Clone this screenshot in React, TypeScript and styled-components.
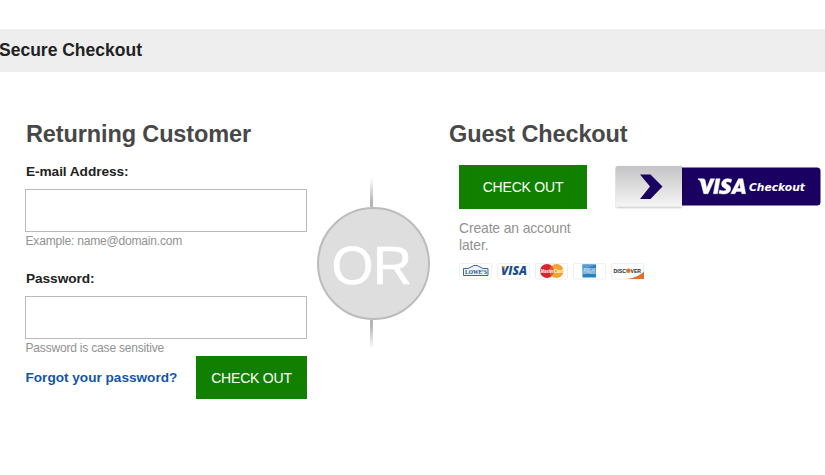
import React from "react";
import styled, { createGlobalStyle } from "styled-components";

const GlobalStyle = createGlobalStyle`
  * { box-sizing: border-box; }
  body {
    margin: 0;
    background: #fff;
    font-family: "Liberation Sans", Arial, Helvetica, sans-serif;
  }
`;

const Page = styled.div`
  width: 825px;
  height: 475px;
  padding-top: 29px;
  overflow: hidden;
  background: #fff;
`;

const TitleBar = styled.header`
  height: 43px;
  background: #eee;
`;

const Title = styled.h1`
  margin: 0 0 0 -1px;
  font-size: 17.5px;
  line-height: 43px;
  color: #222;
`;

const Columns = styled.main`
  display: flex;
  align-items: flex-start;
  padding: 46px 0 0 26px;
`;

const Heading = styled.h2`
  margin: 0;
  height: 46px;
  font-size: 23.5px;
  line-height: 32px;
  letter-spacing: -0.12px;
  color: #484848;
  white-space: nowrap;
`;

const Returning = styled.section`
  width: 281px;
`;

const Field = styled.div<{ $gap?: number }>`
  display: flex;
  flex-direction: column;
  margin-bottom: ${(p) => p.$gap ?? 0}px;
`;

const Label = styled.label`
  height: 25px;
  font-size: 13.7px;
  font-weight: bold;
  line-height: 15px;
  letter-spacing: -0.08px;
  color: #222;
`;

const Input = styled.input`
  width: 282px;
  height: 43px;
  margin-left: -1px;
  border: 1px solid #b9b9b9;
  background: #fff;
  outline: none;
`;

const Hint = styled.span`
  height: 18px;
  margin-left: -0.5px;
  font-size: 12.05px;
  line-height: 18px;
  letter-spacing: -0.21px;
  color: #929292;
`;

const Actions = styled.div`
  display: flex;
  justify-content: space-between;
  align-items: center;
  margin-top: -1px;
`;

const Link = styled.a`
  margin-left: -0.5px;
  font-size: 13.6px;
  font-weight: bold;
  color: #1255a8;
`;

const Button = styled.button<{ $w: number; $h: number }>`
  width: ${(p) => p.$w}px;
  height: ${(p) => p.$h}px;
  padding: 0;
  border: 0;
  background: #118000;
  color: #fff;
  font: 14px "Liberation Sans", Arial, sans-serif;
  letter-spacing: -0.2px;
  white-space: nowrap;
`;

const Divider = styled.div`
  display: flex;
  flex-direction: column;
  align-items: center;
  width: 112px;
  margin: 60px 20px 0 10px;
`;

const Stem = styled.div<{ $down?: boolean }>`
  width: 3px;
  height: 29px;
  margin-right: 3px;
  background: linear-gradient(${(p) => (p.$down ? "to bottom" : "to top")}, #b5b5b5 20%, #fff);
`;

const OrCircle = styled.div`
  display: flex;
  align-items: center;
  justify-content: center;
  width: 113px;
  height: 113px;
  flex: none;
  border: 2px solid #bcbcbc;
  border-radius: 50%;
  background: #dedede;
  color: #fff;
  font-size: 54px;
  line-height: 60px;
  padding: 2px 3px 0 0;
  letter-spacing: -0.5px;
  -webkit-text-stroke: 0.6px #fff;
`;

const Guest = styled.section`
  width: 376px;
`;

const GuestRow = styled.div`
  display: flex;
  align-items: flex-start;
  gap: 24px;
  margin-top: 1px;
  padding-left: 10px;
`;

const GuestOption = styled.div`
  width: 132px;
`;

const Note = styled.p`
  width: 120px;
  margin: 11px 0 0;
  font-size: 13.9px;
  line-height: 17px;
  letter-spacing: -0.12px;
  color: #929292;
`;

const Cards = styled.div`
  display: flex;
  gap: 5px;
  padding: 9px 0 0 10px;
  svg { display: block; }
`;

const VisaCheckout = () => (
  <svg width="210" height="46" viewBox="0 0 210 46" role="img" aria-label="Visa Checkout">
    <defs>
      <linearGradient id="silver" x1="0" y1="0" x2="0" y2="1">
        <stop offset="0" stopColor="#c4c4c6" />
        <stop offset="1" stopColor="#f5f5f5" />
      </linearGradient>
      <filter id="soft" x="-10%" y="-10%" width="120%" height="130%">
        <feDropShadow dx="0" dy="1" stdDeviation="1" floodOpacity="0.3" />
      </filter>
    </defs>
    <path d="M66 2.500H202a3.500 3.500 0 0 1 3.500 3.500V37a3.500 3.500 0 0 1-3.500 3.500H66Z" fill="#1a0061" />
    <path d="M3 1H67V41.500H3a2.500 2.500 0 0 1-2.500-2.500V3.500A2.500 2.500 0 0 1 3 1Z" fill="url(#silver)" filter="url(#soft)" />
    <path d="M25 9.500H35.500L47.500 21.500 35.500 34H25L35 21.500Z" fill="#1a0061" />
    <g fill="#fff" stroke="#fff" strokeWidth=".5" strokeLinejoin="round">
      <path d="M83 13.800h5.200q1.700 0 2 1.700l1.500 7.900L95.500 13.800h4.200L93 28.700h-4.200L85.800 17.300Q85.400 15 83 14.200Z" />
      <path d="M101 13.800h4L102.400 28.700h-4Z" />
      <path d="M116.700 14.500l-.8 3c-2.200-1-5-.9-5 .4 0 1.600 4.800 1.800 4.800 5.600 0 5.500-7.200 6.500-11.800 4.700l.8-3.200c2.800 1.300 6.500 1.200 6.500-.4 0-1.500-4.600-1.800-4.600-5.400 0-5.200 6-6.600 10.100-4.700Z" />
      <path fillRule="evenodd" d="M123.500 13.800h4.300L130.600 28.700h-3.800l-.4-2.300h-5.200L120 28.700h-4.200Zm1 4.400L122.300 23.500h3.300Z" />
    </g>
    <text x="134" y="26" fill="#fff" fontFamily="DejaVu Sans" fontStyle="italic" fontWeight="700" fontSize="11" textLength="56" lengthAdjust="spacingAndGlyphs">Checkout</text>
  </svg>
);

const CardSvg = styled.svg`
  flex: none;
`;

const CardFrame = () => (
  <rect x=".5" y=".5" width="32" height="15.500" rx="1" fill="#fff" stroke="#f0f0f0" />
);

const LowesCard = () => (
  <CardSvg width="33" height="17">
    <CardFrame />
    <path d="M4.500 12.500V5.500H9L15 2.500H18L24 5.500H29V12.500Z" fill="#eef3fa" stroke="#3c659e" />
    <text x="6" y="11.300" fill="#174985" fontFamily="Liberation Serif" fontWeight="700" fontSize="6.500" textLength="22" lengthAdjust="spacingAndGlyphs">LOWE’S</text>
  </CardSvg>
);

const VisaCard = () => (
  <CardSvg width="33" height="17">
    <CardFrame />
    <text x="4" y="11.500" fill="#204c8b" fontFamily="Open Sans" fontStyle="italic" fontWeight="800" fontSize="11.500" textLength="26" lengthAdjust="spacingAndGlyphs">VISA</text>
    <path d="M4 3h3l1.500 3Z" fill="#e6a33b" />
  </CardSvg>
);

const MasterCard = () => (
  <CardSvg width="33" height="17">
    <CardFrame />
    <circle cx="12" cy="8" r="7" fill="#d9262e" />
    <circle cx="21.500" cy="8" r="7" fill="#efa52d" />
    <path d="M16.750 2.900a7 7 0 0 1 0 10.200 7 7 0 0 1 0-10.200Z" fill="#e4572c" />
    <text x="5.500" y="10.300" fill="#fff" fontFamily="Liberation Sans" fontStyle="italic" fontWeight="700" fontSize="6.200" textLength="22.500" lengthAdjust="spacingAndGlyphs">MasterCard</text>
  </CardSvg>
);

const AmexCard = () => (
  <CardSvg width="33" height="17">
    <CardFrame />
    <rect x="9.500" y="1.500" width="13.500" height="13" fill="#2a7fbe" />
    <path d="M9.500 1.500h13.500L9.500 7Z" fill="#559ed0" />
    <text x="10.200" y="7.800" fill="#e8f4fc" fontFamily="Liberation Sans" fontWeight="700" fontSize="3.500" textLength="12.200" lengthAdjust="spacingAndGlyphs">AMERICAN</text>
    <text x="10.200" y="11.100" fill="#e8f4fc" fontFamily="Liberation Sans" fontWeight="700" fontSize="3.500" textLength="12.200" lengthAdjust="spacingAndGlyphs">EXPRESS</text>
  </CardSvg>
);

const DiscoverCard = () => (
  <CardSvg width="33" height="17">
    <CardFrame />
    <path d="M33 8.500V16H16Q27 14.500 33 8.500Z" fill="#dd7328" />
    <g fill="#292527" fontFamily="Liberation Sans" fontWeight="700" fontSize="6">
      <text x="2.500" y="9.800" textLength="12.500" lengthAdjust="spacingAndGlyphs">DISC</text>
      <text x="19.500" y="9.800" textLength="10.500" lengthAdjust="spacingAndGlyphs">VER</text>
    </g>
    <circle cx="17.300" cy="7.700" r="2.300" fill="#dd7328" />
  </CardSvg>
);

export default function App() {
  return (
    <>
      <GlobalStyle />
      <Page>
        <TitleBar>
          <Title>Secure Checkout</Title>
        </TitleBar>
        <Columns>
          <Returning>
            <Heading>Returning Customer</Heading>
            <Field $gap={21}>
              <Label htmlFor="email">E-mail Address:</Label>
              <Input id="email" type="email" />
              <Hint>Example: name@domain.com</Hint>
            </Field>
            <Field>
              <Label htmlFor="password">Password:</Label>
              <Input id="password" type="password" />
              <Hint>Password is case sensitive</Hint>
            </Field>
            <Actions>
              <Link>Forgot your password?</Link>
              <Button $w={111} $h={43}>CHECK OUT</Button>
            </Actions>
          </Returning>
          <Divider>
            <Stem />
            <OrCircle>OR</OrCircle>
            <Stem $down />
          </Divider>
          <Guest>
            <Heading>Guest Checkout</Heading>
            <GuestRow>
              <GuestOption>
                <Button $w={128} $h={44}>CHECK OUT</Button>
                <Note>Create an account later.</Note>
              </GuestOption>
              <VisaCheckout />
            </GuestRow>
            <Cards>
              <LowesCard />
              <VisaCard />
              <MasterCard />
              <AmexCard />
              <DiscoverCard />
            </Cards>
          </Guest>
        </Columns>
      </Page>
    </>
  );
}
